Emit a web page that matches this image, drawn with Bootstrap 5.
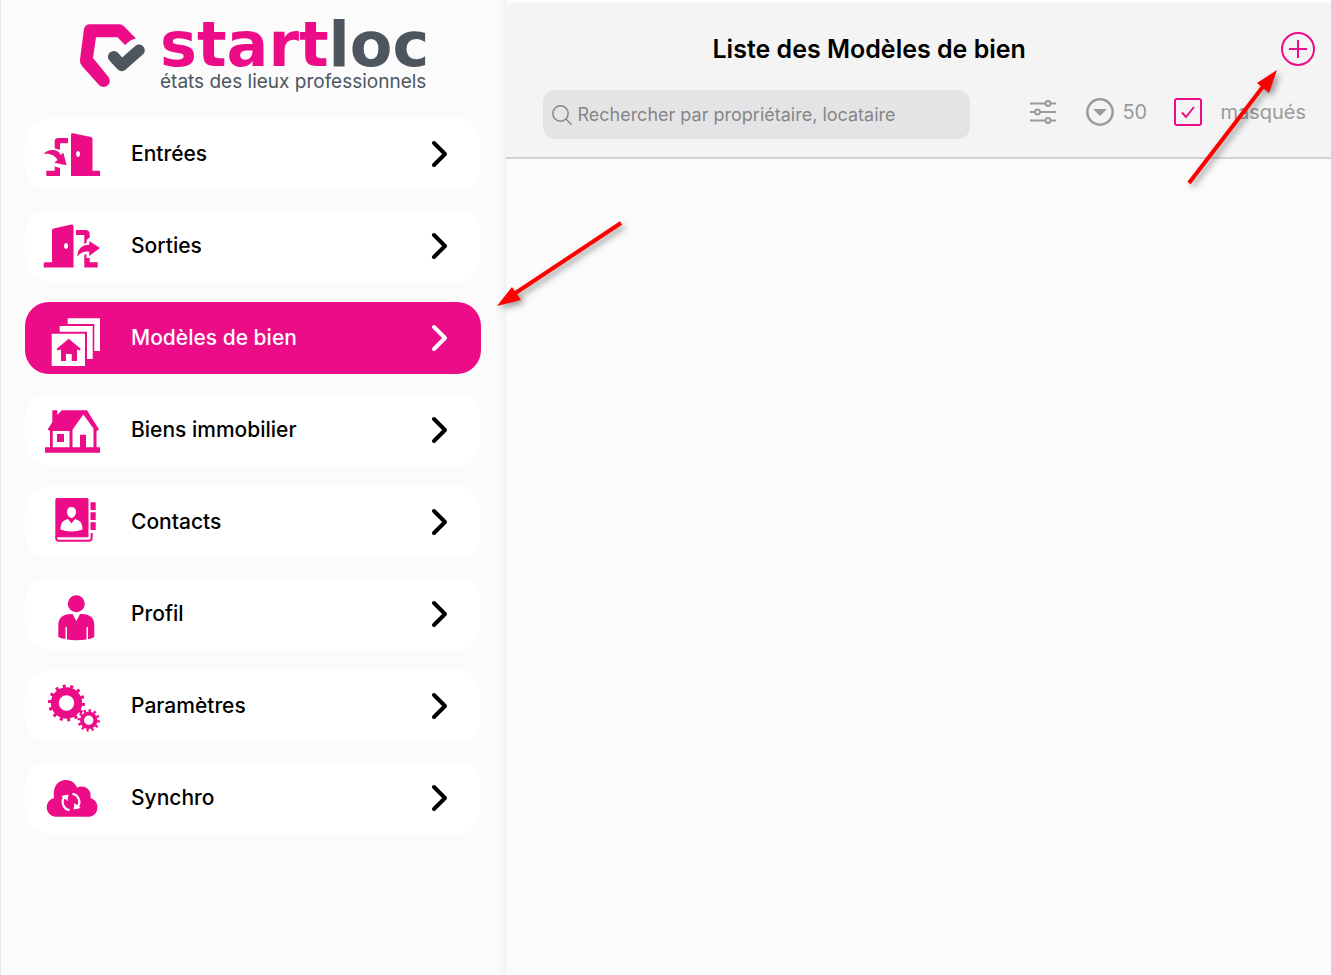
<!DOCTYPE html>
<html lang="fr">
<head>
<meta charset="utf-8">
<meta name="viewport" content="width=device-width, initial-scale=1">
<title>Startloc – Modèles de bien</title>
<link rel="stylesheet" href="https://cdn.jsdelivr.net/npm/bootstrap@5.3.0/dist/css/bootstrap.min.css">
<style>
:root { --pink: #ed0c88; --slate: #4d565e; --muted: #9a9a9a; }
body { font-family: Inter, "Liberation Sans", sans-serif; background: #fbfbfb; color: #000; }
.app-shell { border-left: 1px solid #e6e6e6; }
.side-pane { width: 38%; padding: 22px 25px 22px 24px; background: linear-gradient(to left, #f1f1f1, #f8f8f8 4px, #fbfbfb 14px); }
.brand-link { height: 72px; margin: 0 54px 24px 54px; }
.brand-word { font-family: "DejaVu Sans", sans-serif; font-size: 62px; line-height: 46px; font-weight: 700; color: var(--pink); }
.brand-word span { color: var(--slate); }
.brand-tag { font-size: 19px; line-height: 28px; color: var(--slate); }
.menu-pills { gap: 20px; }
.menu-pills .nav-link { height: 72px; padding: 0 31px 0 17px; border-radius: 24px; background: #fff; color: #000; font-size: 21px; line-height: 32px; font-weight: 500; }
.menu-pills .nav-link.active { background: var(--pink); color: #fff; }
.menu-icon { width: 64px; height: 72px; margin-right: 25px; fill: var(--pink); flex: none; }
.active .menu-icon { fill: #fff; }
.chevron { width: 20px; height: 32px; fill: none; stroke: currentColor; stroke-width: 4; stroke-linecap: round; stroke-linejoin: round; }
.list-header { padding: 26px 16px 18px 37px; background: #f4f4f4; border-top: 3px solid #fbfbfb; border-bottom: 2px solid #d2d2d4; }
.list-title { font-size: 25px; line-height: 40px; font-weight: 600; }
.title-row { height: 40px; margin-bottom: 21px; }
.title-row .add-btn { width: 34px; height: 34px; margin-left: 86px; }
.search-field { height: 49px; border-radius: 12px; background: #e4e4e6; padding: 0 9px; gap: 5px; }
.search-field input { font-size: 18px; line-height: 28px; color: #333; box-shadow: none !important; }
.search-field input::placeholder { color: #868688; opacity: 1; }
.tool-set { margin: 0 9px 6px 60px; color: var(--muted); font-size: 20px; line-height: 28px; }
.count-label { margin: 0 8px 0 30px; }
.count-select { appearance: none; border: 0; background: none; color: inherit; font-size: 20px; padding: 0; width: 24px; }
.tool-set .form-check-input { width: 28px; height: 28px; margin: 0 18px 0 28px; border: 2px solid var(--pink); border-radius: 3px; background-color: transparent; }
.tool-set .form-check-input:checked { background-image: url("data:image/svg+xml,%3Csvg xmlns='http://www.w3.org/2000/svg' viewBox='0 0 24 24'%3E%3Cpath d='M6 12.500l4 4.500 8-10' fill='none' stroke='%23ed0c88' stroke-width='2'/%3E%3C/svg%3E"); background-size: 24px; }
.callout-arrow { position: absolute; pointer-events: none; fill: red; stroke: red; filter: drop-shadow(3px 3px 3px rgba(0,0,0,.4)); overflow: visible; }
.callout-add { right: 16px; top: 68px; }
.callout-menu { left: -10px; top: 220px; }
</style>
<script src="https://cdn.jsdelivr.net/npm/bootstrap@5.3.0/dist/js/bootstrap.bundle.min.js"></script>
</head>
<body>
<div class="app-shell d-flex min-vh-100">
  <aside class="side-pane flex-shrink-0">
    <a href="#" class="brand-link d-flex text-decoration-none" aria-label="startloc">
      <svg class="flex-shrink-0" width="81" height="72" viewBox="79 22 81 72" aria-hidden="true">
        <path fill="#ed0c88" d="M90 24.300H119Q122 24.300 124 26.300L136 38.500Q133 39 130.500 40.500L125 45 117.500 37.300H96L93 58 108.500 77C113 83 105 90.500 99 85L82 66Q79.500 63 80 59.500L84 29Q85 24.300 90 24.300Z"/>
        <path fill="none" stroke="#4d565e" stroke-width="11.500" stroke-linecap="round" stroke-linejoin="round" d="M113.700 56.700L121.700 65.500 139 50.300"/>
      </svg>
      <div>
        <div class="brand-word">start<span>loc</span></div>
        <div class="brand-tag text-nowrap">états des lieux professionnels</div>
      </div>
    </a>
    <nav class="menu-pills nav flex-column" aria-label="Menu principal">
      <a class="nav-link d-flex align-items-center" href="#">
        <svg class="menu-icon" viewBox="0 0 64 72" aria-hidden="true">
          <path fill-rule="evenodd" d="M29 16.500Q29 15 31 15.300L49 19Q50.500 19.500 50.500 21V52.700H58V58H29ZM36 33A2 3 0 1 0 36.100 33Z"/>
          <path d="M26 20V25.300H18V32Q15 30.500 12.700 30.500V23Q13 20 16 20ZM12.700 48.500L18 50V58H5Q4 58 4.300 56V52.700H12.700ZM1.700 36C6 30 17 31 18.500 37L21.300 34.700 24.700 47.300 12.300 44.700 15.500 42C13 37 7 35 1.700 36Z"/>
        </svg>
        <span class="flex-fill">Entrées</span>
        <svg class="chevron" viewBox="0 0 20 32" aria-hidden="true"><path d="M4 5L15 16 4 27"/></svg>
      </a>
      <a class="nav-link d-flex align-items-center" href="#">
        <svg class="menu-icon" viewBox="0 0 64 72" aria-hidden="true">
          <path fill-rule="evenodd" d="M31.500 57.500V16Q31.500 14 29.500 14.500L11.500 18.500Q10 19 10 20.500V52.300H3Q1.700 52.300 1.700 54V57.500ZM24 33A2 3 0 1 0 24.100 33Z"/>
          <path d="M34 20H44Q47.700 20.500 47.700 24V28Q44.500 28 44.500 33L42.300 34V25H34ZM42.300 44.700L44.500 44V48H47.700V52.300H55.700V57.500H42.300ZM35.300 46.700C35.500 39 40 34.500 47.300 34.700V31L58 38 47.300 46V41.700C42 41 38 43 35.300 46.700Z"/>
        </svg>
        <span class="flex-fill">Sorties</span>
        <svg class="chevron" viewBox="0 0 20 32" aria-hidden="true"><path d="M4 5L15 16 4 27"/></svg>
      </a>
      <a class="nav-link active d-flex align-items-center" href="#" aria-current="page">
        <svg class="menu-icon" viewBox="0 0 64 72" aria-hidden="true">
          <path d="M25.700 16.300H58V49H52.300V22H25.700ZM17.700 24H50.700V57H45V29.700H17.700Z"/>
          <path fill-rule="evenodd" d="M9.700 31.700H43V64H9.700ZM26.700 36.700L14.500 47 16 48.500 19 47.500V59H24V52H29.700V59H35V47.500L37.500 48.500 39 47Z"/>
        </svg>
        <span class="flex-fill">Modèles de bien</span>
        <svg class="chevron" viewBox="0 0 20 32" aria-hidden="true"><path d="M4 5L15 16 4 27"/></svg>
      </a>
      <a class="nav-link d-flex align-items-center" href="#">
        <svg class="menu-icon" viewBox="0 0 64 72" aria-hidden="true">
          <path fill-rule="evenodd" d="M3 53.300H8V37L5.700 35.500 10.300 28V16.300H15.300V21L19.700 16.300H45L57 35.500 54.500 37V53.300H58V58.700H3ZM10.700 37H27.500V53.300H10.700ZM30.500 35.700L41.300 20.500 51.500 34.500V53.300H44V40.700H38V53.300H30.500Z"/>
          <path d="M15 40H22V48H15Z"/>
        </svg>
        <span class="flex-fill">Biens immobilier</span>
        <svg class="chevron" viewBox="0 0 20 32" aria-hidden="true"><path d="M4 5L15 16 4 27"/></svg>
      </a>
      <a class="nav-link d-flex align-items-center" href="#">
        <svg class="menu-icon" viewBox="0 0 64 72" aria-hidden="true">
          <path fill-rule="evenodd" d="M15 12H45Q46.500 12 46.500 13.500V50Q46.500 51.300 45 51.300H13.300V14Q13.300 12 15 12ZM29.500 21C23 21 24 31 29.500 32 35 31 36 21 29.500 21ZM26 33C20 34.500 18.500 38 18.500 43.500 25 46 34 46 40.500 43.500 40.500 38 39 34.500 33 33L29.500 37.500Z"/>
          <path fill="none" stroke="#ed0c88" stroke-width="2" d="M14.300 50V52.500Q14.300 54.700 17 54.700H47Q49.700 54.700 49.700 52V47"/>
          <path d="M48.500 16.300H53.700V24H48.500ZM48.500 26.300H53.700V34H48.500ZM48.500 36.300H53.700V44H48.500Z"/>
        </svg>
        <span class="flex-fill">Contacts</span>
        <svg class="chevron" viewBox="0 0 20 32" aria-hidden="true"><path d="M4 5L15 16 4 27"/></svg>
      </a>
      <a class="nav-link d-flex align-items-center" href="#">
        <svg class="menu-icon" viewBox="0 0 64 72" aria-hidden="true">
          <circle cx="34.300" cy="25.700" r="8.500"/>
          <path d="M30.500 36L34.300 43 38 36C48 35.500 52.300 40 52.300 47V59Q49 61 46 61.300V49H44.500V61.500Q34 63 25 61.500V49H23.500V61Q19 60.500 16.300 59V47C16.300 40 21 35.500 30.500 36Z"/>
        </svg>
        <span class="flex-fill">Profil</span>
        <svg class="chevron" viewBox="0 0 20 32" aria-hidden="true"><path d="M4 5L15 16 4 27"/></svg>
      </a>
      <a class="nav-link d-flex align-items-center" href="#">
        <svg class="menu-icon" viewBox="0 0 64 72" aria-hidden="true">
          <g fill="none" stroke="#ed0c88">
            <circle cx="24.500" cy="33" r="11.700" stroke-width="8"/>
            <circle cx="24.500" cy="33" r="16.500" stroke-width="4" pathLength="28" stroke-dasharray="0.800 1.200"/>
            <circle cx="46.700" cy="50.300" r="6.700" stroke-width="4"/>
            <circle cx="46.700" cy="50.300" r="9.700" stroke-width="3" pathLength="24" stroke-dasharray="0.900 1.100"/>
          </g>
        </svg>
        <span class="flex-fill">Paramètres</span>
        <svg class="chevron" viewBox="0 0 20 32" aria-hidden="true"><path d="M4 5L15 16 4 27"/></svg>
      </a>
      <a class="nav-link d-flex align-items-center" href="#">
        <svg class="menu-icon" viewBox="0 0 64 72" aria-hidden="true">
          <path d="M13 54.700A9.500 9.500 0 0 1 12 36C10.500 24 16 18 24 18 29.500 18 33 21 35 25.500 42 22 50 27 48.500 36 58.500 39 57.500 54 47 54.700Z"/>
          <g fill="none" stroke="#fff" stroke-width="2.200">
            <path d="M27.500 48.200A8.300 8.300 0 0 1 23 34.300M30.500 31.800A8.300 8.300 0 0 1 35 45.700"/>
          </g>
          <path fill="#fff" d="M19.300 34L26.500 32.500 25.500 39ZM38.700 46L31.500 47.500 32.500 41Z"/>
        </svg>
        <span class="flex-fill">Synchro</span>
        <svg class="chevron" viewBox="0 0 20 32" aria-hidden="true"><path d="M4 5L15 16 4 27"/></svg>
      </a>
    </nav>
  </aside>

  <main class="flex-fill position-relative">
    <header class="list-header">
      <div class="title-row d-flex align-items-center">
        <h1 class="list-title flex-fill text-center mb-0">Liste des Modèles de bien</h1>
        <button type="button" class="add-btn btn p-0 border-0 d-flex" aria-label="Ajouter un modèle">
          <svg width="34" height="34" viewBox="0 0 34 34" fill="none" stroke="#ed0c88" stroke-width="2" aria-hidden="true"><circle cx="17" cy="17" r="16"/><path d="M17 8V26M8 17H26"/></svg>
        </button>
      </div>
      <div class="d-flex align-items-center">
        <div class="search-field d-flex align-items-center flex-fill">
          <svg class="flex-shrink-0" width="20" height="22" viewBox="0 0 20 22" fill="none" stroke="#868688" stroke-width="1.500" aria-hidden="true"><circle cx="8.500" cy="9.500" r="7.700"/><path d="M14 15L19.500 20.500"/></svg>
          <input type="search" class="form-control border-0 bg-transparent p-0" placeholder="Rechercher par propriétaire, locataire" aria-label="Rechercher">
        </div>
        <div class="tool-set d-flex align-items-center flex-shrink-0">
          <button type="button" class="btn p-0 border-0 d-flex" aria-label="Filtres">
            <svg width="26" height="24" viewBox="0 0 26 24" fill="none" stroke="#9a9a9a" stroke-width="2" aria-hidden="true"><path d="M0 3.500H15.500M20.500 3.500H26M0 12H5M10 12H26M0 20.500H15.500M20.500 20.500H26"/><circle cx="18" cy="3.500" r="2.400"/><circle cx="7.500" cy="12" r="2.400"/><circle cx="18" cy="20.500" r="2.400"/></svg>
          </button>
          <label for="count" class="count-label d-flex" aria-label="Nombre de résultats">
            <svg width="28" height="28" viewBox="0 0 28 28" aria-hidden="true"><circle cx="14" cy="14" r="12.700" fill="none" stroke="#9a9a9a" stroke-width="2.500"/><path fill="#9a9a9a" d="M7 11H21L14 18Z"/></svg>
          </label>
          <select id="count" class="count-select"><option>50</option><option>100</option></select>
          <input id="hidden-items" type="checkbox" class="form-check-input flex-shrink-0" checked>
          <label for="hidden-items">masqués</label>
        </div>
      </div>
    </header>
    <svg class="callout-arrow callout-add" width="130" height="120" viewBox="1185 68 130 120" aria-hidden="true">
      <path fill="none" stroke-width="4" d="M1189 183L1265 84"/><path stroke="none" d="M1277 70L1257 83 1269 93Z"/>
    </svg>
    <svg class="callout-arrow callout-menu" width="130" height="90" viewBox="496 220 130 90" aria-hidden="true">
      <path fill="none" stroke-width="4" d="M621 223L514 294"/><path stroke="none" d="M497 306L512 287 521 300Z"/>
    </svg>
  </main>
</div>
</body>
</html>
